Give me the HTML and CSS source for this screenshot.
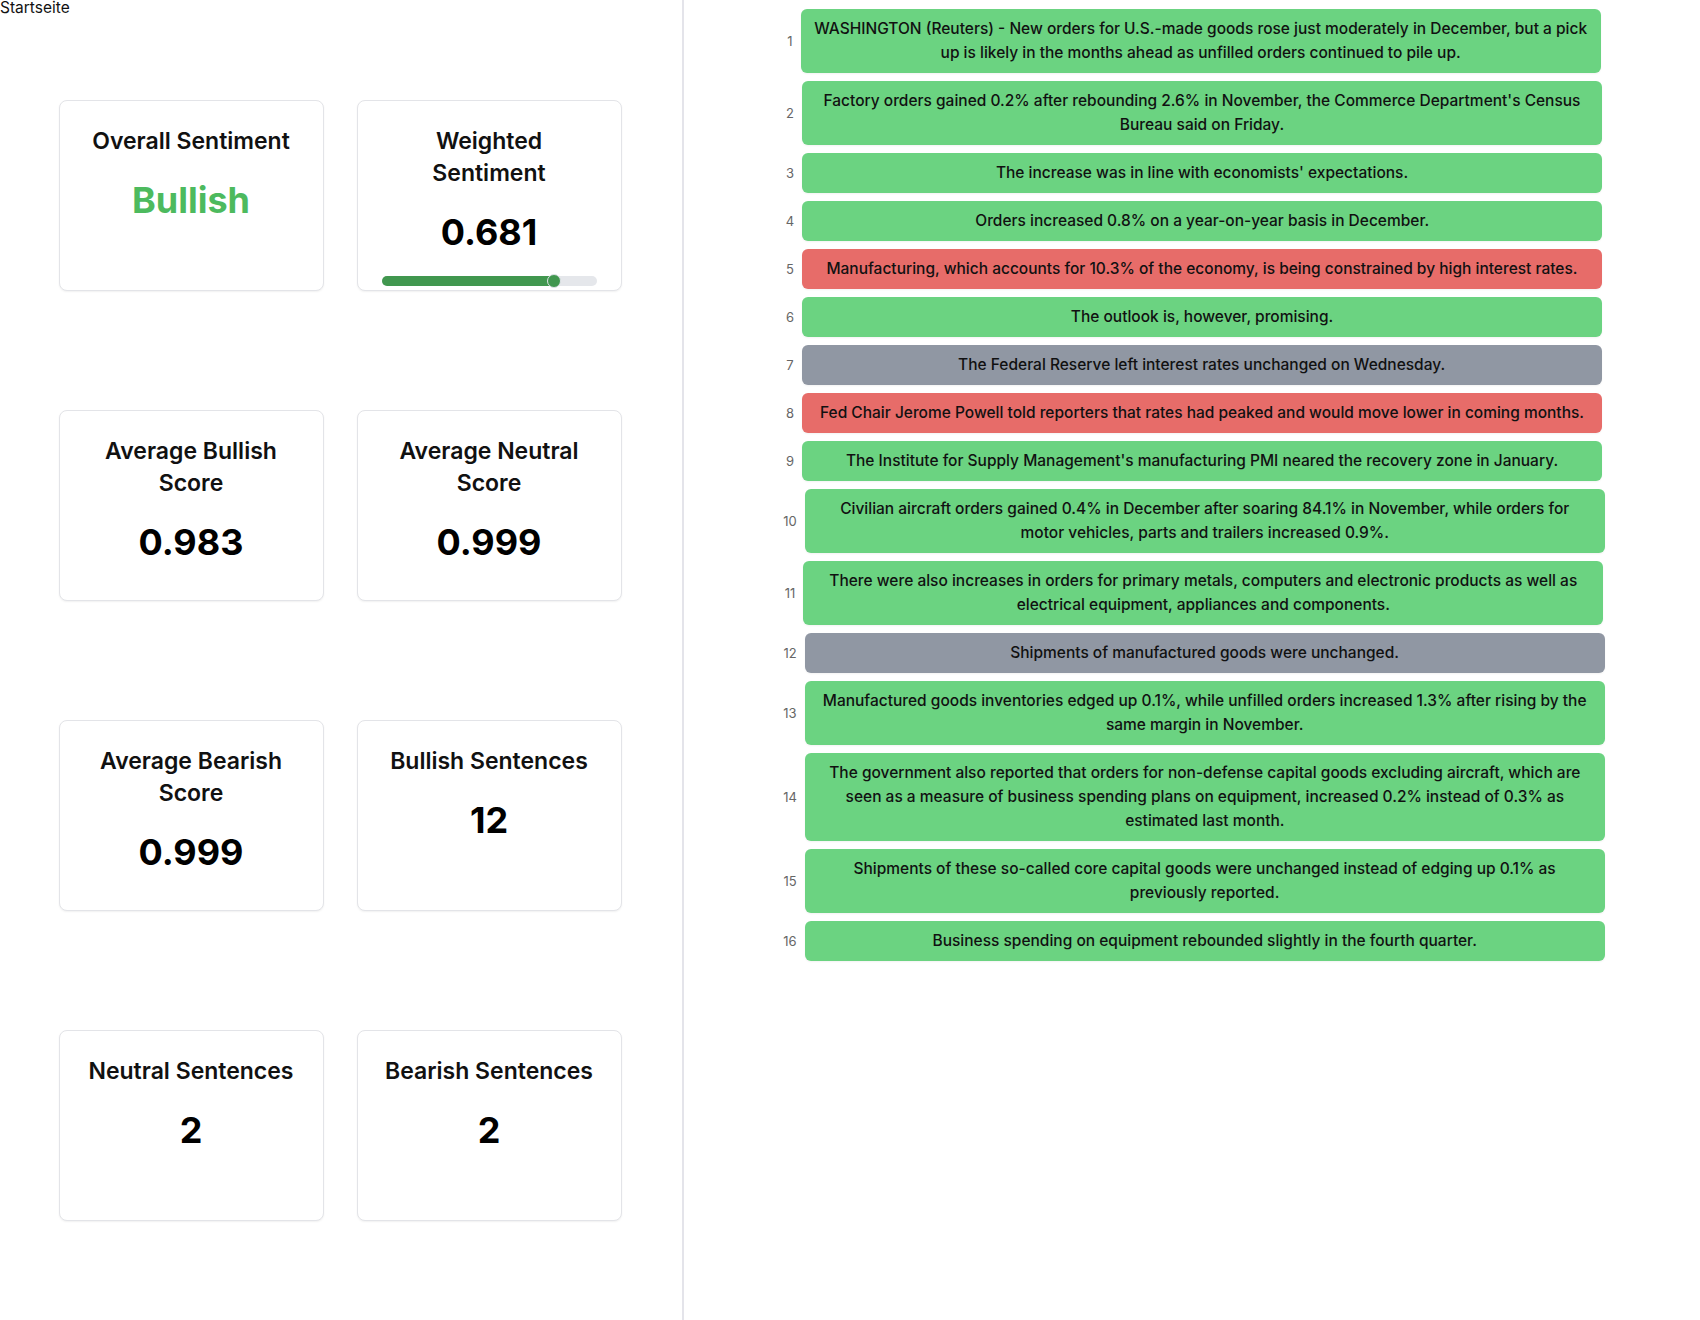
FILE: index.html
```html
<!DOCTYPE html>
<html lang="de">
<head>
<meta charset="utf-8">
<title>Startseite</title>
<link rel="stylesheet" href="styles.css">
</head>
<body>
<div class="app">
  <aside class="left">
    <div class="crumb">Startseite</div>
    <div class="grid">
      <div class="card">
        <div class="card-title">Overall Sentiment</div>
        <div class="card-value bullish">Bullish</div>
      </div>
      <div class="card">
        <div class="card-title">Weighted Sentiment</div>
        <div class="card-value">0.681</div>
        <div class="meter">
          <div class="meter-fill" style="width:80%"></div>
          <div class="meter-thumb" style="left:80%"></div>
        </div>
      </div>
      <div class="card">
        <div class="card-title">Average Bullish Score</div>
        <div class="card-value">0.983</div>
      </div>
      <div class="card">
        <div class="card-title">Average Neutral Score</div>
        <div class="card-value">0.999</div>
      </div>
      <div class="card">
        <div class="card-title">Average Bearish Score</div>
        <div class="card-value">0.999</div>
      </div>
      <div class="card">
        <div class="card-title">Bullish Sentences</div>
        <div class="card-value">12</div>
      </div>
      <div class="card">
        <div class="card-title">Neutral Sentences</div>
        <div class="card-value">2</div>
      </div>
      <div class="card">
        <div class="card-title">Bearish Sentences</div>
        <div class="card-value">2</div>
      </div>
    </div>
  </aside>
  <main class="right">
    <div class="sentences">
      <div class="row"><span class="num">1</span><div class="sent pos">WASHINGTON (Reuters) - New orders for U.S.-made goods rose just moderately in December, but a pick up is likely in the months ahead as unfilled orders continued to pile up.</div></div>
      <div class="row"><span class="num">2</span><div class="sent pos">Factory orders gained 0.2% after rebounding 2.6% in November, the Commerce Department's Census Bureau said on Friday.</div></div>
      <div class="row"><span class="num">3</span><div class="sent pos">The increase was in line with economists' expectations.</div></div>
      <div class="row"><span class="num">4</span><div class="sent pos">Orders increased 0.8% on a year-on-year basis in December.</div></div>
      <div class="row"><span class="num">5</span><div class="sent neg">Manufacturing, which accounts for 10.3% of the economy, is being constrained by high interest rates.</div></div>
      <div class="row"><span class="num">6</span><div class="sent pos">The outlook is, however, promising.</div></div>
      <div class="row"><span class="num">7</span><div class="sent neu">The Federal Reserve left interest rates unchanged on Wednesday.</div></div>
      <div class="row"><span class="num">8</span><div class="sent neg">Fed Chair Jerome Powell told reporters that rates had peaked and would move lower in coming months.</div></div>
      <div class="row"><span class="num">9</span><div class="sent pos">The Institute for Supply Management's manufacturing PMI neared the recovery zone in January.</div></div>
      <div class="row"><span class="num">10</span><div class="sent pos">Civilian aircraft orders gained 0.4% in December after soaring 84.1% in November, while orders for motor vehicles, parts and trailers increased 0.9%.</div></div>
      <div class="row"><span class="num">11</span><div class="sent pos">There were also increases in orders for primary metals, computers and electronic products as well as electrical equipment, appliances and components.</div></div>
      <div class="row"><span class="num">12</span><div class="sent neu">Shipments of manufactured goods were unchanged.</div></div>
      <div class="row"><span class="num">13</span><div class="sent pos">Manufactured goods inventories edged up 0.1%, while unfilled orders increased 1.3% after rising by the same margin in November.</div></div>
      <div class="row"><span class="num">14</span><div class="sent pos">The government also reported that orders for non-defense capital goods excluding aircraft, which are seen as a measure of business spending plans on equipment, increased 0.2% instead of 0.3% as estimated last month.</div></div>
      <div class="row"><span class="num">15</span><div class="sent pos">Shipments of these so-called core capital goods were unchanged instead of edging up 0.1% as previously reported.</div></div>
      <div class="row"><span class="num">16</span><div class="sent pos">Business spending on equipment rebounded slightly in the fourth quarter.</div></div>
    </div>
  </main>
</div>
</body>
</html>
```

FILE: styles.css
```css
* { box-sizing: border-box; }
html, body { margin: 0; padding: 0; background: #ffffff; }
body {
  font-family: Inter, "Noto Sans", "Liberation Sans", sans-serif;
  color: #111111;
}
.app {
  display: flex;
  min-height: 100vh;
}
.left {
  width: 684px;
  flex: 0 0 684px;
  border-right: 2px solid #e4e4ea;
}
.crumb {
  font-size: 15.5px;
  line-height: 16px;
  color: #111;
}
.grid {
  margin-top: 84px;
  padding-right: 2px;
  display: grid;
  grid-template-columns: repeat(2, 265px);
  column-gap: 33px;
  row-gap: 119px;
  justify-content: center;
}
.card {
  height: 191px;
  border: 1px solid #e3e4e8;
  border-radius: 8px;
  box-shadow: 0 1px 2px rgba(0, 0, 0, 0.06);
  padding: 24px 24px;
  text-align: center;
  background: #fff;
}
.card-title {
  font-size: 23px;
  line-height: 32px;
  font-weight: 600;
  color: #111;
}
.card-value {
  margin-top: 22px;
  font-size: 36px;
  line-height: 43px;
  font-weight: 700;
  color: #000;
}
.card-value.bullish { color: #4dba5e; }
.meter {
  position: relative;
  margin-top: 22px;
  height: 10px;
  border-radius: 5px;
  background: #e5e7eb;
}
.meter-fill {
  height: 100%;
  border-radius: 5px;
  background: #41974f;
}
.meter-thumb {
  position: absolute;
  top: 50%;
  width: 14px;
  height: 14px;
  border-radius: 50%;
  background: #41974f;
  border: 1.5px solid #dfe3e8;
  transform: translate(-50%, -50%);
}
.right {
  flex: 1 1 auto;
  padding-top: 9px;
}
.sentences {
  display: flex;
  flex-direction: column;
  gap: 8px;
}
.row {
  display: flex;
  justify-content: center;
  align-items: center;
  gap: 4px;
}
.num {
  padding: 0 4px;
  font-size: 13px;
  color: #666;
}
.sent {
  width: 800px;
  padding: 8px 12.5px;
  border-radius: 6px;
  text-align: center;
  font-size: 15.5px;
  line-height: 24px;
  font-weight: 500;
  color: #111;
  box-shadow: 0 1px 2px rgba(0, 0, 0, 0.05);
}
.pos { background: #6bd381; }
.neg { background: #e76c69; }
.neu { background: #9097a3; }
```
